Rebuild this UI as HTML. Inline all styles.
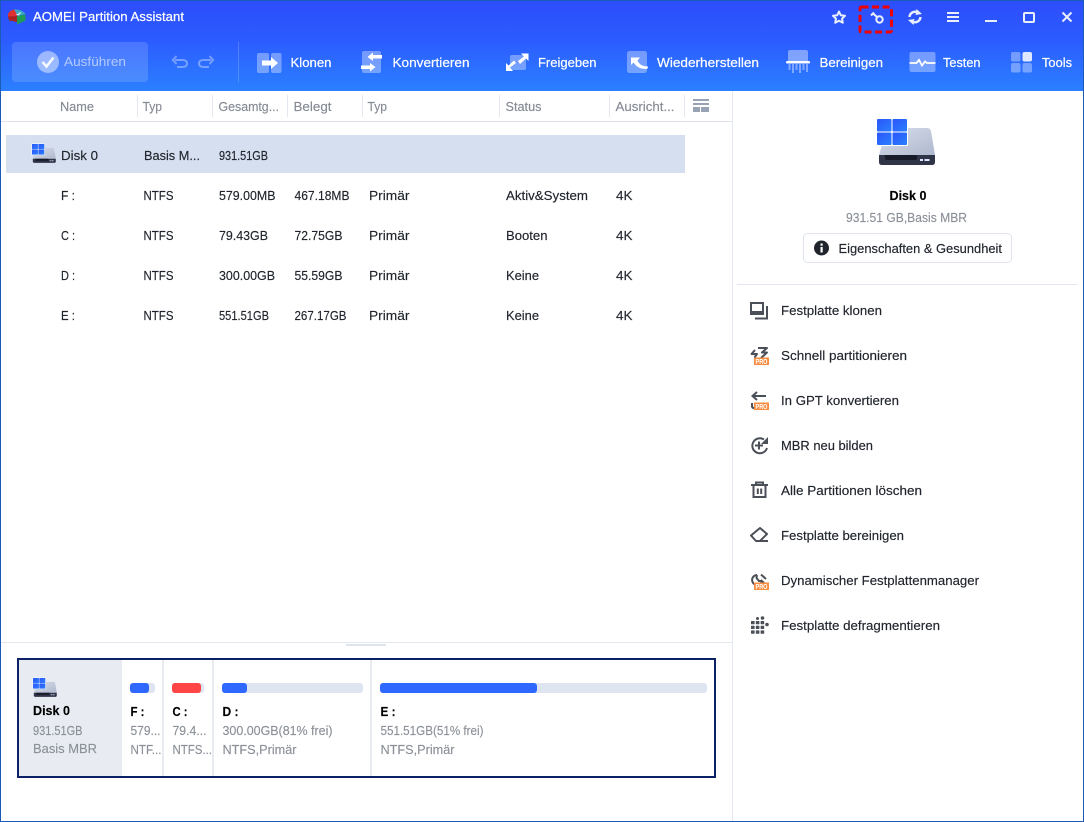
<!DOCTYPE html>
<html lang="de">
<head>
<meta charset="utf-8">
<title>AOMEI Partition Assistant</title>
<style>
html,body{margin:0;padding:0;background:#fff;width:1084px;height:822px;overflow:hidden}
svg{display:block;position:absolute;left:0;top:0}
text{font-family:"Liberation Sans",sans-serif;font-size:13px;fill:#20242c;stroke:#20242c;stroke-width:.15}
.w{fill:#fff;stroke:#fff;stroke-width:.2}
.h{fill:#858a94;stroke:#858a94}
.g{fill:#8b9098;stroke:#8b9098}
.b{font-weight:bold;fill:#000;stroke:#000}
.i{fill:none;stroke:#4b4f58;stroke-width:2}
.t{fill:none;stroke:#e8eefc;stroke-width:2}
.p{font-size:7.5px;font-weight:bold;fill:#fff;stroke:none}
.a{fill:#fff;stroke:none;fill-opacity:.58}
</style>
</head>
<body>
<svg width="1084" height="822" viewBox="0 0 1084 822" xmlns="http://www.w3.org/2000/svg">
<defs>
<linearGradient id="bg" x1="0" y1="0" x2="0" y2="1"><stop offset="0" stop-color="#2d4dfb"/><stop offset=".45" stop-color="#2c5cff"/><stop offset="1" stop-color="#2b80ff"/></linearGradient>
<linearGradient id="hd" x1="0" y1="0" x2="1" y2="1"><stop offset="0" stop-color="#d9dfeb"/><stop offset="1" stop-color="#afb8ce"/></linearGradient>
<linearGradient id="wi" x1="0" y1="0" x2="1" y2="1"><stop offset="0" stop-color="#2b55f8"/><stop offset="1" stop-color="#2b80ff"/></linearGradient>
<g id="disk">
<path d="M10 9H50Q53 9 54 12L58 36H2Z" fill="url(#hd)"/>
<path d="M2 36H58V43Q58 46 55 46H5Q2 46 2 43Z" fill="#2f3447"/>
<path d="M8 36H40V39Q40 41 38 41H10Q8 41 8 39Z" fill="#171a28"/>
<rect x="43" y="40" width="3" height="2" fill="#dfe6ff"/><rect x="47.500" y="40" width="5" height="2" fill="#dfe6ff"/>
<rect x="-1" y="-1" width="32" height="28" fill="#fff"/>
<rect x="0" y="0" width="14.500" height="12.500" rx="1" fill="url(#wi)"/>
<rect x="15.500" y="0" width="14.500" height="12.500" rx="1" fill="url(#wi)"/>
<rect x="0" y="13.500" width="14.500" height="12.500" rx="1" fill="url(#wi)"/>
<rect x="15.500" y="13.500" width="14.500" height="12.500" rx="1" fill="url(#wi)"/>
</g>
</defs>

<rect x="0" y="0" width="1084" height="91" fill="url(#bg)"/>
<rect x="0" y="0" width="1084" height="1" fill="#1a5bb5"/>
<rect x="0" y="0" width="1" height="822" fill="#1a5bb5"/>
<rect x="1083" y="0" width="1" height="822" fill="#1a5bb5"/>
<rect x="0" y="821" width="1084" height="1" fill="#1a5bb5"/>

<!-- logo -->
<path d="M8 14Q10 9.500 16 9.500L17 16L8 17Z" fill="#e03131"/><path d="M8 16.500L17 16V22L9 20.500Z" fill="#a82323"/>
<path d="M14 9.500Q22 9 25.500 14L18 16Z" fill="#3ba8c4"/><path d="M17 16L25.500 14.500V20.500L17 24.500Z" fill="#1f9d55"/>
<path d="M16.500 14L18 15L20.500 12.500" fill="none" stroke="#fff" stroke-width="1"/>
<text class="w" x="33" y="21" textLength="151" lengthAdjust="spacingAndGlyphs">AOMEI Partition Assistant</text>

<!-- window controls -->
<path d="M839 11.500L840.800 15.300L845 15.800L842 18.700L842.800 22.800L839 20.800L835.200 22.800L836 18.700L833 15.800L837.200 15.300Z" fill="none" stroke="#e8eefc" stroke-width="2" stroke-linejoin="round"/>
<rect x="860" y="7" width="31.500" height="25" rx="1.500" fill="none" stroke="#f00000" stroke-width="3" stroke-dasharray="7 3.500"/>
<circle cx="879.500" cy="19.500" r="3.200" fill="none" stroke="#e8eefc" stroke-width="2"/>
<path d="M877 17L872.500 13M871 15.500L874 12.500" fill="none" stroke="#e8eefc" stroke-width="2"/>
<path d="M909.500 17A5.700 5.700 0 0 1 918.500 12.800M920.500 17A5.700 5.700 0 0 1 911.500 21.200" fill="none" stroke="#e8eefc" stroke-width="2.400"/>
<path d="M916.500 9L922 14L915.500 15ZM913.500 25L908 20L914.500 19Z" fill="#e8eefc"/>
<path d="M947 13H959M947 17H959M947 21H959" fill="none" stroke="#e8eefc" stroke-width="2"/>
<rect x="985" y="20" width="12" height="2" fill="#e8eefc"/>
<rect x="1024" y="13" width="10" height="9" rx="1" fill="none" stroke="#e8eefc" stroke-width="2"/>
<path d="M1062.500 12.500L1071.500 21.500M1071.500 12.500L1062.500 21.500" fill="none" stroke="#e8eefc" stroke-width="2"/>

<!-- toolbar -->
<rect x="12" y="42" width="136" height="40" rx="4" fill="#fff" fill-opacity=".15"/>
<circle cx="48" cy="62" r="11" fill="#fff" fill-opacity=".45"/>
<path d="M42.500 62L46.500 66.500L53.500 57.500" fill="none" stroke="#fff" stroke-opacity=".9" stroke-width="2.600"/>
<text class="a" x="64" y="66" textLength="62" lengthAdjust="spacingAndGlyphs">Ausführen</text>
<path d="M175 60H182Q187 60 187 63.500T182 67H177M176.500 56L172.800 60L176.500 64" fill="none" stroke="#fff" stroke-opacity=".35" stroke-width="2"/>
<path d="M211 60H204Q199 60 199 63.500T204 67H209M209.500 56L213.200 60L209.500 64" fill="none" stroke="#fff" stroke-opacity=".35" stroke-width="2"/>
<rect x="238" y="42" width="1" height="40" fill="#fff" fill-opacity=".18"/>

<rect x="257" y="53" width="12" height="20" rx="2" fill="#fff" fill-opacity=".35"/>
<rect x="271" y="53" width="10.500" height="20" rx="2" fill="#fff" fill-opacity=".35"/>
<path d="M262 60.500H271V57L278 63L271 69V65.500H262Z" fill="#fff"/>
<text class="w" x="290.500" y="67" textLength="41" lengthAdjust="spacingAndGlyphs">Klonen</text>

<rect x="362" y="51" width="19" height="22" rx="2" fill="#fff" fill-opacity=".35"/>
<path d="M382 55H373V52.500L367.500 57L373 61V58.500H382Z" fill="#fff"/>
<path d="M361 65.500H370V63L375.500 67L370 71.500V69H361Z" fill="#fff"/>
<text class="w" x="392.500" y="67" textLength="77" lengthAdjust="spacingAndGlyphs">Konvertieren</text>

<rect x="510" y="55" width="16" height="15" rx="2" fill="#fff" fill-opacity=".35"/>
<path d="M518 61L524 56.500L521 53.500H528.500V61L526 58.500L520 64Z" fill="#fff"/>
<path d="M516 63L510 67.500L513 71H506V63L508.500 65.500L514 60.500Z" fill="#fff"/>
<text class="w" x="538" y="67" textLength="58.500" lengthAdjust="spacingAndGlyphs">Freigeben</text>

<rect x="627" y="51" width="20" height="22" rx="2.500" fill="#fff" fill-opacity=".35"/>
<path d="M631 57.500V65L633.500 62.500C636 66 639 69 646 69C647 69 648 68.500 648 66.500C642 66.500 639 64 637.500 60.500L640 57.500Z" fill="#fff"/>
<text class="w" x="657" y="67" textLength="102" lengthAdjust="spacingAndGlyphs">Wiederherstellen</text>

<path d="M790 50H806Q808 50 808 52V61H788V52Q788 50 790 50Z" fill="#fff" fill-opacity=".4"/>
<rect x="786" y="61" width="24" height="2.500" rx="1" fill="#fff"/>
<path d="M789.500 64V70M793 64V73M796.500 64V70M800 64V73M803.500 64V70M807 64V72" stroke="#fff" stroke-opacity=".4" stroke-width="2" fill="none"/>
<text class="w" x="819.500" y="67" textLength="63.500" lengthAdjust="spacingAndGlyphs">Bereinigen</text>

<rect x="909.500" y="52" width="26" height="20" rx="2" fill="#fff" fill-opacity=".35"/>
<path d="M909.500 63H916.500L919 60L922 65.500L925 61.500L927 63H935.500" fill="none" stroke="#fff" stroke-width="1.800"/>
<text class="w" x="943" y="67" textLength="37.500" lengthAdjust="spacingAndGlyphs">Testen</text>

<rect x="1011" y="52" width="9.500" height="9.500" rx="2" fill="#fff" fill-opacity=".35"/>
<rect x="1022.500" y="52" width="9.500" height="9.500" rx="2" fill="#fff" fill-opacity=".85"/>
<rect x="1011" y="63" width="9.500" height="9.500" rx="2" fill="#fff" fill-opacity=".35"/>
<rect x="1022.500" y="63" width="9.500" height="9.500" rx="2" fill="#fff" fill-opacity=".35"/>
<text class="w" x="1042" y="67" textLength="30" lengthAdjust="spacingAndGlyphs">Tools</text>

<!-- table header -->
<text class="h" x="60" y="111" textLength="34" lengthAdjust="spacingAndGlyphs">Name</text>
<text class="h" x="142.500" y="111" textLength="19.500" lengthAdjust="spacingAndGlyphs">Typ</text>
<text class="h" x="218.500" y="111" textLength="60.500" lengthAdjust="spacingAndGlyphs">Gesamtg...</text>
<text class="h" x="293.500" y="111" textLength="38" lengthAdjust="spacingAndGlyphs">Belegt</text>
<text class="h" x="367.500" y="111" textLength="19.500" lengthAdjust="spacingAndGlyphs">Typ</text>
<text class="h" x="505.500" y="111" textLength="36" lengthAdjust="spacingAndGlyphs">Status</text>
<text class="h" x="615.500" y="111" textLength="59" lengthAdjust="spacingAndGlyphs">Ausricht...</text>
<path d="M137.500 95V117M212.500 95V117M287.500 95V117M362.500 95V117M499.500 95V117M609.500 95V117M684.500 95V117" stroke="#e3e7f0" stroke-width="1" fill="none"/>
<rect x="693" y="99" width="16" height="2" fill="#98a3b5"/>
<rect x="693" y="103" width="16" height="2" fill="#98a3b5"/>
<rect x="693" y="107" width="7" height="5" fill="#98a3b5"/>
<rect x="701" y="107" width="8" height="5" fill="#98a3b5"/>
<rect x="1" y="121" width="731" height="1" fill="#dfe4ec"/>
<rect x="732" y="91" width="1" height="730" fill="#e3e7f0"/>

<!-- rows -->
<rect x="6" y="135" width="679" height="38" fill="#d5dfef"/>
<use href="#disk" transform="translate(32 144) scale(.41)"/>
<text x="61" y="160" textLength="37" lengthAdjust="spacingAndGlyphs">Disk 0</text>
<text x="144" y="160" textLength="56" lengthAdjust="spacingAndGlyphs">Basis M...</text>
<text x="219" y="160" textLength="49" lengthAdjust="spacingAndGlyphs">931.51GB</text>

<text x="61" y="200" textLength="14" lengthAdjust="spacingAndGlyphs">F :</text>
<text x="143.500" y="200" textLength="30" lengthAdjust="spacingAndGlyphs">NTFS</text>
<text x="219" y="200" textLength="56.500" lengthAdjust="spacingAndGlyphs">579.00MB</text>
<text x="294.500" y="200" textLength="55" lengthAdjust="spacingAndGlyphs">467.18MB</text>
<text x="369" y="200" textLength="40.500" lengthAdjust="spacingAndGlyphs">Primär</text>
<text x="506" y="200" textLength="82" lengthAdjust="spacingAndGlyphs">Aktiv&amp;System</text>
<text x="616" y="200" textLength="16.500" lengthAdjust="spacingAndGlyphs">4K</text>

<text x="61" y="240" textLength="14" lengthAdjust="spacingAndGlyphs">C :</text>
<text x="143.500" y="240" textLength="30" lengthAdjust="spacingAndGlyphs">NTFS</text>
<text x="219" y="240" textLength="49" lengthAdjust="spacingAndGlyphs">79.43GB</text>
<text x="294.500" y="240" textLength="48" lengthAdjust="spacingAndGlyphs">72.75GB</text>
<text x="369" y="240" textLength="40.500" lengthAdjust="spacingAndGlyphs">Primär</text>
<text x="506" y="240" textLength="41.500" lengthAdjust="spacingAndGlyphs">Booten</text>
<text x="616" y="240" textLength="16.500" lengthAdjust="spacingAndGlyphs">4K</text>

<text x="61" y="280" textLength="14" lengthAdjust="spacingAndGlyphs">D :</text>
<text x="143.500" y="280" textLength="30" lengthAdjust="spacingAndGlyphs">NTFS</text>
<text x="219" y="280" textLength="56" lengthAdjust="spacingAndGlyphs">300.00GB</text>
<text x="294.500" y="280" textLength="48" lengthAdjust="spacingAndGlyphs">55.59GB</text>
<text x="369" y="280" textLength="40.500" lengthAdjust="spacingAndGlyphs">Primär</text>
<text x="506" y="280" textLength="33" lengthAdjust="spacingAndGlyphs">Keine</text>
<text x="616" y="280" textLength="16.500" lengthAdjust="spacingAndGlyphs">4K</text>

<text x="61" y="320" textLength="14" lengthAdjust="spacingAndGlyphs">E :</text>
<text x="143.500" y="320" textLength="30" lengthAdjust="spacingAndGlyphs">NTFS</text>
<text x="219" y="320" textLength="50" lengthAdjust="spacingAndGlyphs">551.51GB</text>
<text x="294.500" y="320" textLength="52" lengthAdjust="spacingAndGlyphs">267.17GB</text>
<text x="369" y="320" textLength="40.500" lengthAdjust="spacingAndGlyphs">Primär</text>
<text x="506" y="320" textLength="33" lengthAdjust="spacingAndGlyphs">Keine</text>
<text x="616" y="320" textLength="16.500" lengthAdjust="spacingAndGlyphs">4K</text>

<!-- splitter -->
<rect x="1" y="642" width="731" height="1" fill="#e3e7f0"/>
<rect x="346" y="644" width="40" height="2" fill="#dfe4ec"/>

<!-- disk map -->
<rect x="18" y="659" width="697" height="118" fill="#fff" stroke="#0d2266" stroke-width="2"/>
<rect x="19" y="660" width="103" height="116" fill="#e8ebf2"/>
<rect x="162" y="660" width="2" height="116" fill="#e8ebf2"/>
<rect x="212" y="660" width="2" height="116" fill="#e8ebf2"/>
<rect x="370" y="660" width="2" height="116" fill="#e8ebf2"/>
<use href="#disk" transform="translate(33 678) scale(.41)"/>
<text class="b" x="33" y="715" textLength="37" lengthAdjust="spacingAndGlyphs">Disk 0</text>
<text class="g" x="33" y="735" textLength="49.500" lengthAdjust="spacingAndGlyphs">931.51GB</text>
<text class="g" x="33" y="753" textLength="64" lengthAdjust="spacingAndGlyphs">Basis MBR</text>

<rect x="130" y="683" width="25" height="10" rx="3" fill="#dfe5f0"/>
<rect x="130" y="683" width="19" height="10" rx="3" fill="#2e68ff"/>
<text class="b" x="130.500" y="716" textLength="14" lengthAdjust="spacingAndGlyphs">F :</text>
<text class="g" x="130.500" y="735" textLength="30" lengthAdjust="spacingAndGlyphs">579...</text>
<text class="g" x="130.500" y="754" textLength="31" lengthAdjust="spacingAndGlyphs">NTF...</text>

<rect x="172" y="683" width="32" height="10" rx="3" fill="#dfe5f0"/>
<rect x="172" y="683" width="29" height="10" rx="3" fill="#ff4545"/>
<text class="b" x="172.500" y="716" textLength="15" lengthAdjust="spacingAndGlyphs">C :</text>
<text class="g" x="172.500" y="735" textLength="34" lengthAdjust="spacingAndGlyphs">79.4...</text>
<text class="g" x="172.500" y="754" textLength="39.500" lengthAdjust="spacingAndGlyphs">NTFS...</text>

<rect x="222" y="683" width="141" height="10" rx="3" fill="#dfe5f0"/>
<rect x="222" y="683" width="25" height="10" rx="3" fill="#2e68ff"/>
<text class="b" x="222.500" y="716" textLength="16" lengthAdjust="spacingAndGlyphs">D :</text>
<text class="g" x="222.500" y="735" textLength="110" lengthAdjust="spacingAndGlyphs">300.00GB(81% frei)</text>
<text class="g" x="222.500" y="754" textLength="74" lengthAdjust="spacingAndGlyphs">NTFS,Primär</text>

<rect x="380" y="683" width="327" height="10" rx="3" fill="#dfe5f0"/>
<rect x="380" y="683" width="157" height="10" rx="3" fill="#2e68ff"/>
<text class="b" x="380.500" y="716" textLength="15" lengthAdjust="spacingAndGlyphs">E :</text>
<text class="g" x="380.500" y="735" textLength="103" lengthAdjust="spacingAndGlyphs">551.51GB(51% frei)</text>
<text class="g" x="380.500" y="754" textLength="74" lengthAdjust="spacingAndGlyphs">NTFS,Primär</text>

<!-- right panel -->
<use href="#disk" transform="translate(877 119)"/>
<text class="b" x="889.500" y="200" textLength="37" lengthAdjust="spacingAndGlyphs">Disk 0</text>
<text class="g" x="846" y="222" textLength="121" lengthAdjust="spacingAndGlyphs">931.51 GB,Basis MBR</text>
<rect x="803.500" y="233.500" width="208" height="29" rx="4" fill="#fff" stroke="#dfe4ee"/>
<circle cx="821.500" cy="248" r="7.500" fill="#20242c"/>
<rect x="820.500" y="247" width="2.200" height="5.500" fill="#fff"/>
<rect x="820.500" y="243.500" width="2.200" height="2.200" fill="#fff"/>
<text x="838.500" y="253" textLength="163.500" lengthAdjust="spacingAndGlyphs">Eigenschaften &amp; Gesundheit</text>
<rect x="737" y="284" width="341" height="1" fill="#e3e7f0"/>

<!-- action: clone -->
<rect x="751" y="303" width="12" height="11" fill="none" stroke="#4b4f58" stroke-width="2"/>
<rect x="750" y="311" width="14" height="3" fill="#4b4f58"/>
<path d="M767 306V318.500H755" class="i"/>
<text x="781" y="315" textLength="101" lengthAdjust="spacingAndGlyphs">Festplatte klonen</text>

<!-- action: quick partition -->
<path d="M758 348H767L762 352.500H767L761 358M755 350L751.500 354H757L754.500 357.500" class="i" stroke-linejoin="round"/>
<rect x="754" y="357.500" width="15" height="7.500" fill="#f98c3f"/>
<text class="p" x="755.500" y="364" textLength="12" lengthAdjust="spacingAndGlyphs">PRO</text>
<text x="781" y="360" textLength="126" lengthAdjust="spacingAndGlyphs">Schnell partitionieren</text>

<!-- action: GPT -->
<path d="M766 396H753M757 392L752.500 396L757 400" class="i"/>
<path d="M752 403V406Q752 408 754 408" class="i"/>
<rect x="754" y="402.500" width="15" height="7.500" fill="#f98c3f"/>
<text class="p" x="755.500" y="409" textLength="12" lengthAdjust="spacingAndGlyphs">PRO</text>
<text x="781" y="405" textLength="118" lengthAdjust="spacingAndGlyphs">In GPT konvertieren</text>

<!-- action: MBR -->
<path d="M764 439.500A7.500 7.500 0 1 0 767 448" class="i"/>
<path d="M768 437V444H761Z" fill="#4b4f58"/>
<path d="M755 445.500H763M759 441.500V449.500" class="i"/>
<text x="781" y="450" textLength="92" lengthAdjust="spacingAndGlyphs">MBR neu bilden</text>

<!-- action: delete -->
<path d="M751 485H768" class="i"/>
<path d="M756 484V482.500H763V484" class="i"/>
<path d="M753.500 486V497H765.500V486" class="i"/>
<path d="M757.800 488.500V494M761.200 488.500V494" class="i"/>
<text x="781" y="495" textLength="141" lengthAdjust="spacingAndGlyphs">Alle Partitionen löschen</text>

<!-- action: wipe -->
<path d="M760 528L767 534L760 541H756L751 535.500Z" class="i" stroke-linejoin="round"/>
<path d="M756 541H768" class="i"/>
<text x="781" y="540" textLength="123" lengthAdjust="spacingAndGlyphs">Festplatte bereinigen</text>

<!-- action: dynamic -->
<path d="M757 575A5 5 0 1 0 762 581L767 586M757 575L756.500 578L759 581L762 581" class="i" stroke-width="1.900"/>
<path d="M761 574.500L766 579" class="i" stroke-width="1.800"/>
<rect x="754" y="582.500" width="15" height="7.500" fill="#f98c3f"/>
<text class="p" x="755.500" y="589" textLength="12" lengthAdjust="spacingAndGlyphs">PRO</text>
<text x="781" y="585" textLength="198" lengthAdjust="spacingAndGlyphs">Dynamischer Festplattenmanager</text>

<!-- action: defrag -->
<g fill="#4b4f58">
<circle cx="757.500" cy="618.500" r="1.500"/><circle cx="762.500" cy="618" r="1.800"/>
<rect x="751" y="621" width="3.600" height="3.300" rx=".5"/><rect x="755.800" y="621" width="3.600" height="3.300" rx=".5"/><rect x="760.600" y="621" width="3.600" height="3.300" rx=".5"/><circle cx="767" cy="624.500" r="1.800"/>
<rect x="751" y="625.700" width="3.600" height="3.300" rx=".5"/><rect x="755.800" y="625.700" width="3.600" height="3.300" rx=".5"/><rect x="760.600" y="625.700" width="3.600" height="3.300" rx=".5"/>
<rect x="751" y="630.400" width="3.600" height="3.300" rx=".5"/><rect x="755.800" y="630.400" width="3.600" height="3.300" rx=".5"/><rect x="760.600" y="630.400" width="3.600" height="3.300" rx=".5"/>
</g>
<text x="781" y="630" textLength="159" lengthAdjust="spacingAndGlyphs">Festplatte defragmentieren</text>
</svg>
</body>
</html>
